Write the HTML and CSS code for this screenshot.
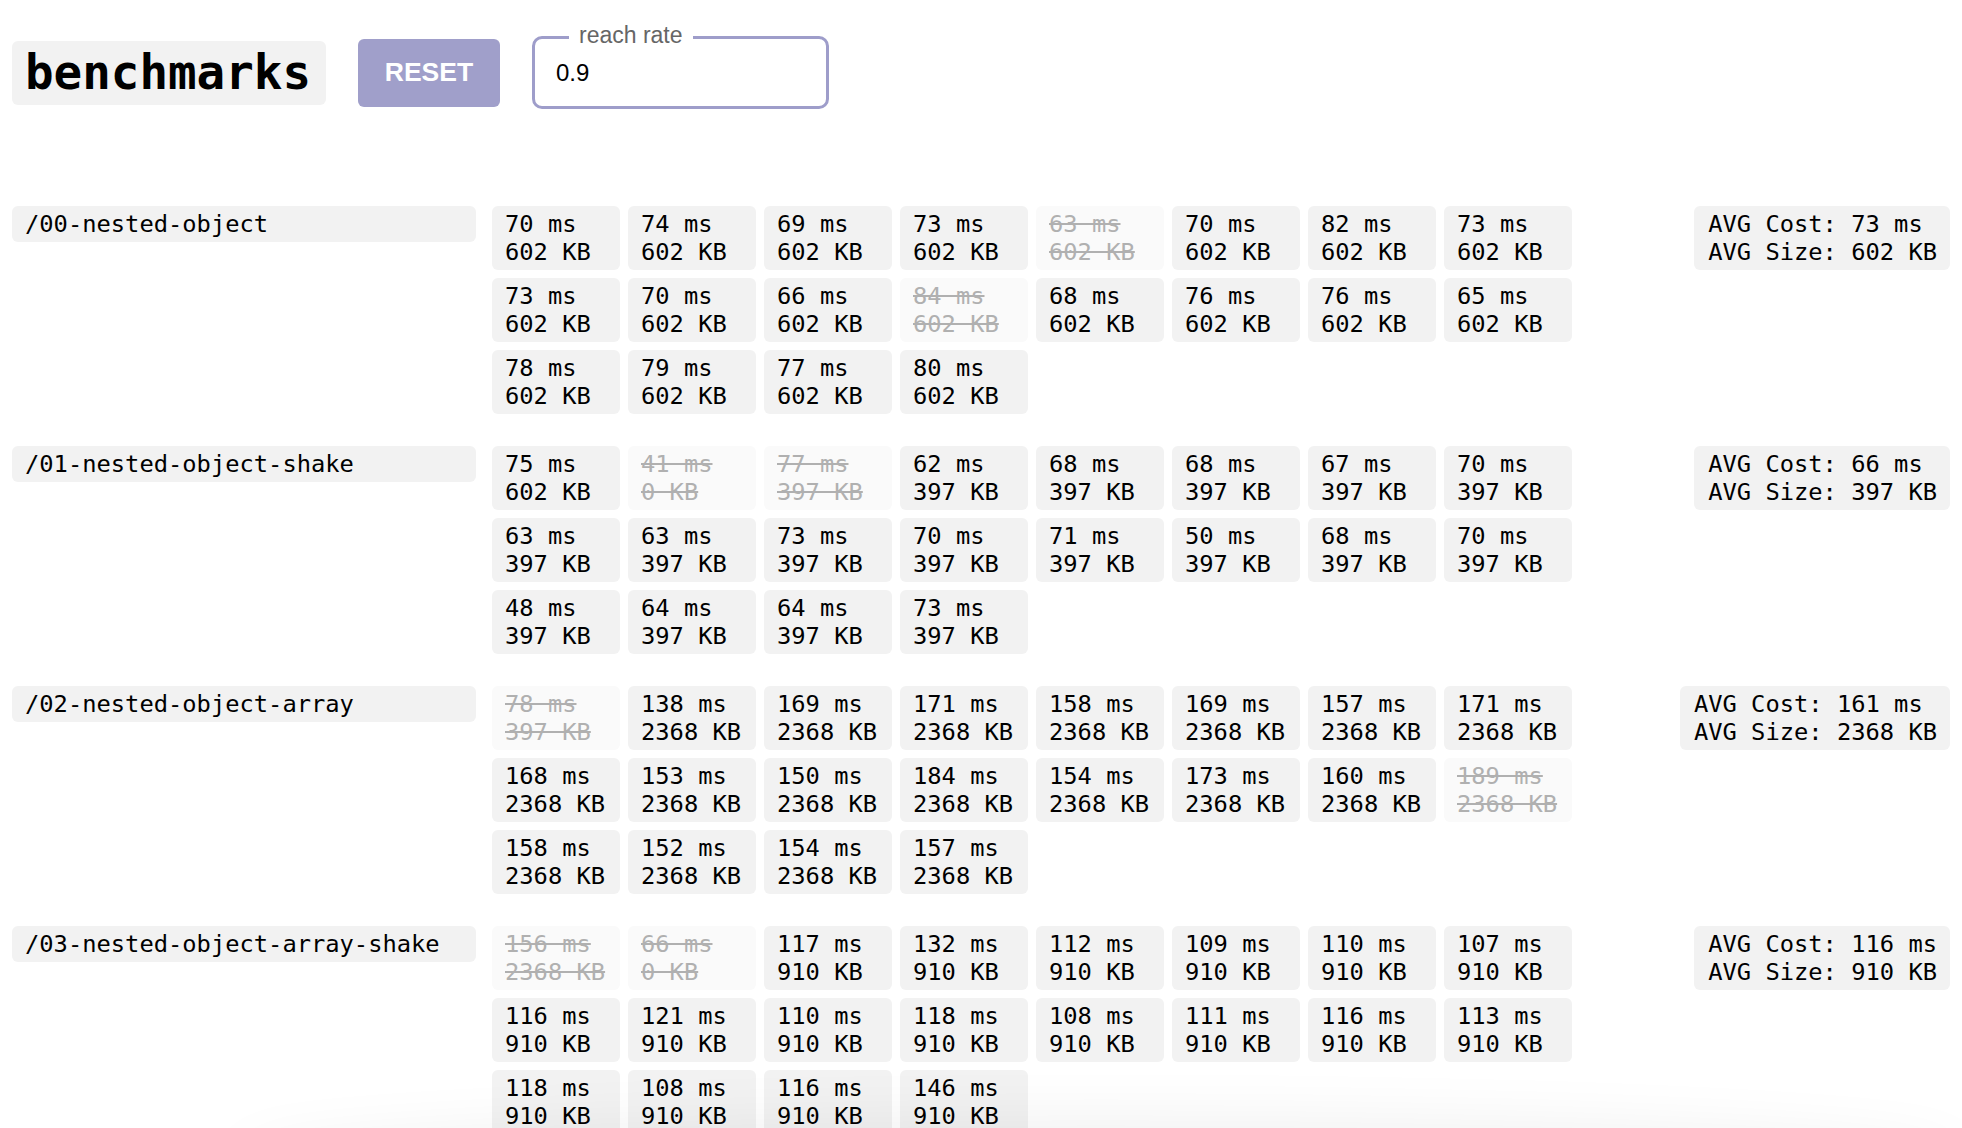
FILE: index.html
```html
<!DOCTYPE html>
<html>
<head>
<meta charset="utf-8">
<title>benchmarks</title>
<link rel="stylesheet" href="styles.css">
</head>
<body>
<header class="toolbar">
  <h1 class="title">benchmarks</h1>
  <button class="reset">RESET</button>
  <div class="field">
    <span class="field-label">reach rate</span>
    <input class="field-input" type="text" value="0.9">
  </div>
</header>

<main class="groups">
  <section class="group">
    <div class="name">/00-nested-object</div>
    <div class="cells">
      <div class="cell"><span>70 ms</span><span>602 KB</span></div>
      <div class="cell"><span>74 ms</span><span>602 KB</span></div>
      <div class="cell"><span>69 ms</span><span>602 KB</span></div>
      <div class="cell"><span>73 ms</span><span>602 KB</span></div>
      <div class="cell off"><span>63 ms</span><span>602 KB</span></div>
      <div class="cell"><span>70 ms</span><span>602 KB</span></div>
      <div class="cell"><span>82 ms</span><span>602 KB</span></div>
      <div class="cell"><span>73 ms</span><span>602 KB</span></div>
      <div class="cell"><span>73 ms</span><span>602 KB</span></div>
      <div class="cell"><span>70 ms</span><span>602 KB</span></div>
      <div class="cell"><span>66 ms</span><span>602 KB</span></div>
      <div class="cell off"><span>84 ms</span><span>602 KB</span></div>
      <div class="cell"><span>68 ms</span><span>602 KB</span></div>
      <div class="cell"><span>76 ms</span><span>602 KB</span></div>
      <div class="cell"><span>76 ms</span><span>602 KB</span></div>
      <div class="cell"><span>65 ms</span><span>602 KB</span></div>
      <div class="cell"><span>78 ms</span><span>602 KB</span></div>
      <div class="cell"><span>79 ms</span><span>602 KB</span></div>
      <div class="cell"><span>77 ms</span><span>602 KB</span></div>
      <div class="cell"><span>80 ms</span><span>602 KB</span></div>
    </div>
    <div class="avg"><span>AVG Cost: 73 ms</span><span>AVG Size: 602 KB</span></div>
  </section>

  <section class="group">
    <div class="name">/01-nested-object-shake</div>
    <div class="cells">
      <div class="cell"><span>75 ms</span><span>602 KB</span></div>
      <div class="cell off"><span>41 ms</span><span>0 KB</span></div>
      <div class="cell off"><span>77 ms</span><span>397 KB</span></div>
      <div class="cell"><span>62 ms</span><span>397 KB</span></div>
      <div class="cell"><span>68 ms</span><span>397 KB</span></div>
      <div class="cell"><span>68 ms</span><span>397 KB</span></div>
      <div class="cell"><span>67 ms</span><span>397 KB</span></div>
      <div class="cell"><span>70 ms</span><span>397 KB</span></div>
      <div class="cell"><span>63 ms</span><span>397 KB</span></div>
      <div class="cell"><span>63 ms</span><span>397 KB</span></div>
      <div class="cell"><span>73 ms</span><span>397 KB</span></div>
      <div class="cell"><span>70 ms</span><span>397 KB</span></div>
      <div class="cell"><span>71 ms</span><span>397 KB</span></div>
      <div class="cell"><span>50 ms</span><span>397 KB</span></div>
      <div class="cell"><span>68 ms</span><span>397 KB</span></div>
      <div class="cell"><span>70 ms</span><span>397 KB</span></div>
      <div class="cell"><span>48 ms</span><span>397 KB</span></div>
      <div class="cell"><span>64 ms</span><span>397 KB</span></div>
      <div class="cell"><span>64 ms</span><span>397 KB</span></div>
      <div class="cell"><span>73 ms</span><span>397 KB</span></div>
    </div>
    <div class="avg"><span>AVG Cost: 66 ms</span><span>AVG Size: 397 KB</span></div>
  </section>

  <section class="group">
    <div class="name">/02-nested-object-array</div>
    <div class="cells">
      <div class="cell off"><span>78 ms</span><span>397 KB</span></div>
      <div class="cell"><span>138 ms</span><span>2368 KB</span></div>
      <div class="cell"><span>169 ms</span><span>2368 KB</span></div>
      <div class="cell"><span>171 ms</span><span>2368 KB</span></div>
      <div class="cell"><span>158 ms</span><span>2368 KB</span></div>
      <div class="cell"><span>169 ms</span><span>2368 KB</span></div>
      <div class="cell"><span>157 ms</span><span>2368 KB</span></div>
      <div class="cell"><span>171 ms</span><span>2368 KB</span></div>
      <div class="cell"><span>168 ms</span><span>2368 KB</span></div>
      <div class="cell"><span>153 ms</span><span>2368 KB</span></div>
      <div class="cell"><span>150 ms</span><span>2368 KB</span></div>
      <div class="cell"><span>184 ms</span><span>2368 KB</span></div>
      <div class="cell"><span>154 ms</span><span>2368 KB</span></div>
      <div class="cell"><span>173 ms</span><span>2368 KB</span></div>
      <div class="cell"><span>160 ms</span><span>2368 KB</span></div>
      <div class="cell off"><span>189 ms</span><span>2368 KB</span></div>
      <div class="cell"><span>158 ms</span><span>2368 KB</span></div>
      <div class="cell"><span>152 ms</span><span>2368 KB</span></div>
      <div class="cell"><span>154 ms</span><span>2368 KB</span></div>
      <div class="cell"><span>157 ms</span><span>2368 KB</span></div>
    </div>
    <div class="avg"><span>AVG Cost: 161 ms</span><span>AVG Size: 2368 KB</span></div>
  </section>

  <section class="group">
    <div class="name">/03-nested-object-array-shake</div>
    <div class="cells">
      <div class="cell off"><span>156 ms</span><span>2368 KB</span></div>
      <div class="cell off"><span>66 ms</span><span>0 KB</span></div>
      <div class="cell"><span>117 ms</span><span>910 KB</span></div>
      <div class="cell"><span>132 ms</span><span>910 KB</span></div>
      <div class="cell"><span>112 ms</span><span>910 KB</span></div>
      <div class="cell"><span>109 ms</span><span>910 KB</span></div>
      <div class="cell"><span>110 ms</span><span>910 KB</span></div>
      <div class="cell"><span>107 ms</span><span>910 KB</span></div>
      <div class="cell"><span>116 ms</span><span>910 KB</span></div>
      <div class="cell"><span>121 ms</span><span>910 KB</span></div>
      <div class="cell"><span>110 ms</span><span>910 KB</span></div>
      <div class="cell"><span>118 ms</span><span>910 KB</span></div>
      <div class="cell"><span>108 ms</span><span>910 KB</span></div>
      <div class="cell"><span>111 ms</span><span>910 KB</span></div>
      <div class="cell"><span>116 ms</span><span>910 KB</span></div>
      <div class="cell"><span>113 ms</span><span>910 KB</span></div>
      <div class="cell"><span>118 ms</span><span>910 KB</span></div>
      <div class="cell"><span>108 ms</span><span>910 KB</span></div>
      <div class="cell"><span>116 ms</span><span>910 KB</span></div>
      <div class="cell"><span>146 ms</span><span>910 KB</span></div>
    </div>
    <div class="avg"><span>AVG Cost: 116 ms</span><span>AVG Size: 910 KB</span></div>
  </section>
</main>
<div class="bottom-shade"></div>
</body>
</html>
```

FILE: styles.css
```css
html, body {
  margin: 0;
  padding: 0;
  background: #ffffff;
}

body {
  padding: 0 12px;
  font-family: "DejaVu Sans Mono", monospace;
  color: #000;
  overflow: hidden;
}

.toolbar {
  display: flex;
  align-items: center;
  margin-top: 36px;
  height: 73px;
}

.title {
  margin: 0;
  padding: 4px 15px 5px 13px;
  background: #f2f2f2;
  border-radius: 6px;
  font-family: "DejaVu Sans Mono", monospace;
  font-weight: bold;
  font-size: 47.5px;
  line-height: 55px;
}

.reset {
  margin-left: 32px;
  width: 142px;
  height: 68px;
  border: none;
  border-radius: 6px;
  background: #a09fca;
  color: #ffffff;
  font-family: "Liberation Sans", Arial, sans-serif;
  font-weight: bold;
  font-size: 26.5px;
  padding: 0;
}

.field {
  position: relative;
  margin-left: 32px;
  width: 297px;
  height: 73px;
  box-sizing: border-box;
  border: 3px solid #9e9dca;
  border-radius: 10px;
  display: flex;
  align-items: center;
}

.field-label {
  position: absolute;
  left: 34px;
  top: -17px;
  padding: 0 10px;
  background: #ffffff;
  color: #666666;
  font-family: "Liberation Sans", Arial, sans-serif;
  font-size: 23px;
  line-height: 27px;
}

.field-input {
  border: none;
  outline: none;
  background: transparent;
  width: 100%;
  padding: 0 0 0 21px;
  font-family: "Liberation Sans", Arial, sans-serif;
  font-size: 24px;
  color: #000;
}

.groups {
  display: flex;
  flex-direction: column;
  gap: 32px;
  margin-top: 97px;
}

.group {
  display: flex;
  align-items: flex-start;
}

.name {
  width: 464px;
  box-sizing: border-box;
  padding: 4px 13px;
  background: #f2f2f2;
  border-radius: 6px;
  font-size: 23.75px;
  line-height: 28px;
  white-space: nowrap;
}

.cells {
  margin-left: 16px;
  display: grid;
  grid-template-columns: repeat(8, 128px);
  gap: 8px;
}

.cell {
  display: flex;
  flex-direction: column;
  padding: 4px 13px;
  background: #f2f2f2;
  border-radius: 6px;
  font-size: 23.75px;
  line-height: 28px;
  white-space: nowrap;
}

.cell.off {
  background: #fafafa;
  color: #b0b0b0;
  text-decoration: line-through;
}

.avg {
  margin-left: auto;
  display: flex;
  flex-direction: column;
  padding: 4px 13px 4px 14px;
  background: #f2f2f2;
  border-radius: 6px;
  font-size: 23.75px;
  line-height: 28px;
  white-space: nowrap;
}

.bottom-shade {
  position: fixed;
  left: 240px;
  right: 0;
  bottom: -70px;
  height: 70px;
  border-radius: 50%;
  box-shadow: 0 0 60px 10px rgba(0, 0, 0, 0.06);
  pointer-events: none;
}
```
